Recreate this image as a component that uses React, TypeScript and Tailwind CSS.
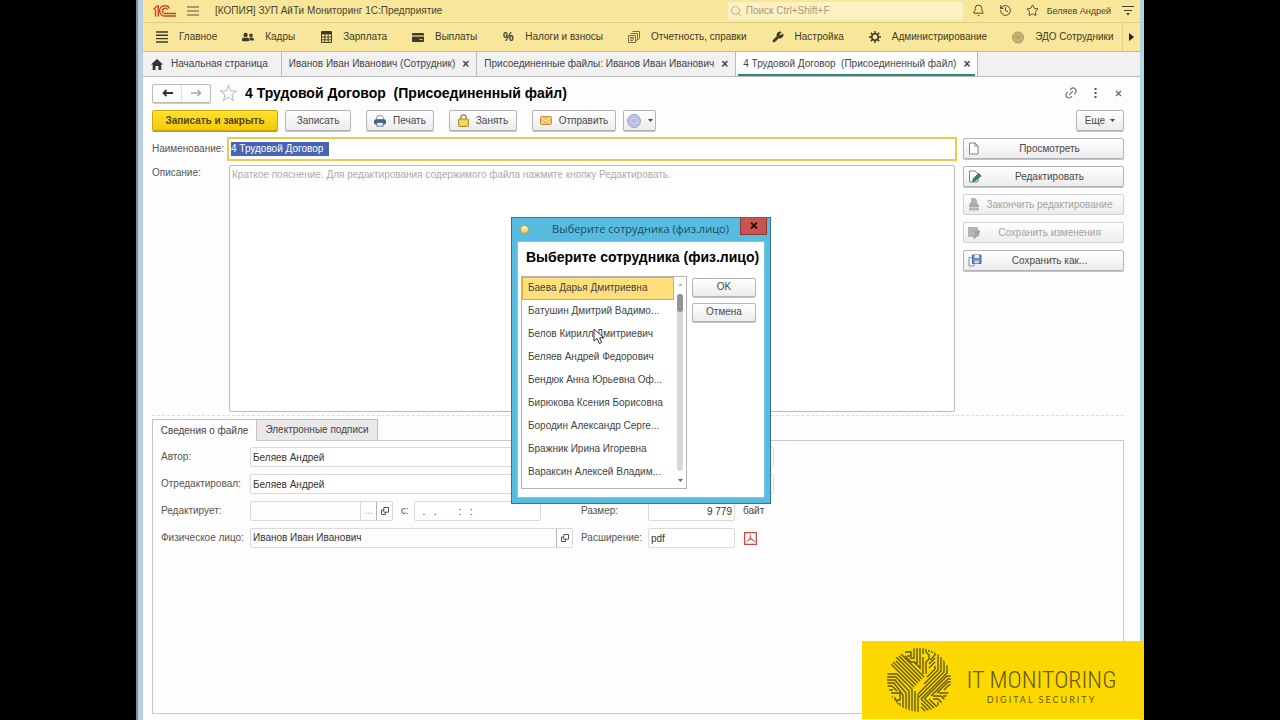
import type { ReactNode } from "react";
import { Bell, History, Link2, Search, Star, Wrench } from "lucide-react";
import { FaUserFriends } from "react-icons/fa";
import clsx from "clsx";

const sections: { label: string; icon: ReactNode }[] = [
  { label: "Главное", icon: <IconLines /> },
  { label: "Кадры", icon: <FaUserFriends size={14} /> },
  { label: "Зарплата", icon: <IconTable /> },
  { label: "Выплаты", icon: <IconCard /> },
  { label: "Налоги и взносы", icon: <span className="text-xs font-bold">%</span> },
  { label: "Отчетность, справки", icon: <IconPapers /> },
  { label: "Настройка", icon: <Wrench size={12} fill="currentColor" /> },
  { label: "Администрирование", icon: <IconGear /> },
  { label: "ЭДО Сотрудники", icon: <IconCoin /> },
];

const employees = [
  "Баева Дарья Дмитриевна",
  "Батушин Дмитрий Вадимо...",
  "Белов Кирилл Дмитриевич",
  "Беляев Андрей Федорович",
  "Бендюк Анна Юрьевна Оф...",
  "Бирюкова Ксения Борисовна",
  "Бородин Александр Серге...",
  "Бражник Ирина Игоревна",
  "Вараксин Алексей Владим...",
];

function IconLines() {
  return (
    <svg width="12" height="12" viewBox="0 0 12 12" stroke="currentColor" strokeWidth="1.4">
      <path d="M0 1h12M0 4.3h12M0 7.6h12M0 11h12" />
    </svg>
  );
}

function IconTable() {
  return (
    <svg width="11" height="12" viewBox="0 0 11 12" fill="none" stroke="currentColor">
      <path d="M.5.5h10v11H.5z" />
      <path d="M.5 2.2h10" strokeWidth="2.4" />
      <path d="M.5 6h10M.5 8.8h10M3.8 3v8.5M7.2 3v8.5" strokeWidth=".9" />
    </svg>
  );
}

function IconCard() {
  return (
    <svg width="12" height="9" viewBox="0 0 12 9">
      <rect width="12" height="9" rx="1" fill="currentColor" />
      <path d="M0 3h12" stroke="#f8e69a" strokeWidth="1.2" />
      <path d="M7.5 6.5h3" stroke="#f8e69a" strokeWidth=".8" />
    </svg>
  );
}

function IconPapers() {
  return (
    <svg width="12" height="12" viewBox="0 0 12 12" fill="none" stroke="#7d6f42">
      <path d="M4.5.5h7v7L10 9M2.5 2.5h7V9L8 10.5" />
      <path d="M.5 4.5h7v7h-7zM2 6.5h4M2 8h4M2 9.5h3" />
    </svg>
  );
}

function IconGear() {
  return (
    <svg width="12" height="12" viewBox="0 0 12 12" fill="none" stroke="currentColor" strokeWidth="1.5">
      <circle cx="6" cy="6" r="3.2" />
      <path d="M6 0v2.5M6 9.5V12M0 6h2.5M9.5 6H12M1.8 1.8l1.7 1.7M8.5 8.5l1.7 1.7M10.2 1.8L8.5 3.5M3.5 8.5l-1.7 1.7" />
    </svg>
  );
}

function IconCoin() {
  return (
    <svg width="13" height="13" viewBox="0 0 13 13">
      <circle cx="6.5" cy="6.5" r="6" fill="#c7b173" stroke="#a8935a" />
      <path d="M4 5.5h5M4 7.5h5" stroke="#b39e62" />
    </svg>
  );
}

function Logo1C() {
  return (
    <svg width="24" height="12" viewBox="0 0 24 12" fill="none" stroke="#cf3f2c">
      <path d="M.5 4.5l3-3M2.5 4.5v7M3.5 1h1.800v10.500" strokeWidth="1.4" />
      <path d="M16.5 3.5A5.2 5.2 0 1 0 12.500 11H23" strokeWidth="1.4" />
      <path d="M14.6 4.8A2.7 2.7 0 1 0 12.500 8.500H23" strokeWidth="1.3" />
    </svg>
  );
}

function IconPrinter() {
  return (
    <svg width="12" height="12" viewBox="0 0 12 12">
      <path d="M3 .8h5l1.500 1.700V5h-7z" fill="#fff" stroke="#6f8296" strokeWidth=".8" />
      <rect y="4.2" width="12" height="5.3" rx="1.8" fill="#46637f" />
      <path d="M2.8 7.5h6.400v3.700H2.800z" fill="#e8eef4" stroke="#46637f" strokeWidth=".8" />
    </svg>
  );
}

function IconLock() {
  return (
    <svg width="11" height="13" viewBox="0 0 11 13">
      <path d="M2.8 6V3.500a2.700 2.700 0 0 1 5.400 0V6" fill="none" stroke="#8c8249" strokeWidth="1.3" />
      <rect x=".5" y="5" width="10" height="7.5" rx=".8" fill="#efcb43" stroke="#a5903c" />
      <path d="M2 7.500h7M2 9.800h7" stroke="#fae798" />
    </svg>
  );
}

function IconMail() {
  return (
    <svg width="12" height="9" viewBox="0 0 12 9">
      <rect x=".5" y=".5" width="11" height="8" rx="1" fill="#f3bd62" stroke="#d28f35" />
      <path d="M1.500 7.500l3-3M10.500 7.500l-3-3M1.500 1.500L6 5l4.500-3.500" fill="none" stroke="#fff0cc" strokeWidth=".9" />
    </svg>
  );
}

function IconStamp() {
  return (
    <svg width="14" height="14" viewBox="0 0 14 14">
      <circle cx="7" cy="7" r="6.4" fill="#c5c9ea" stroke="#9298c9" />
      <circle cx="7" cy="7" r="4" fill="#d9dcf4" stroke="#a2a8d6" strokeWidth=".8" />
      <path d="M4.800 6h4.400M4.800 8h4.400" stroke="#8087c0" strokeWidth=".8" />
    </svg>
  );
}

function IconPage() {
  return (
    <svg width="12" height="13" viewBox="0 0 12 13" fill="#fff" stroke="#80858a">
      <path d="M1.500 1H7l3 3v8H1.500zM7 1v3h3" />
    </svg>
  );
}

function IconEdit() {
  return (
    <svg width="14" height="13" viewBox="0 0 14 13">
      <path d="M1.500 1H7l3 3v8H1.500z" fill="#fff" stroke="#80858a" />
      <path d="M4.500 11.500l.8-3 5.500-5 2.400 2.300-5.700 5z" fill="#3c8a50" stroke="#2b5c3a" strokeWidth=".7" />
    </svg>
  );
}

function IconFinish() {
  return (
    <svg width="12" height="13" viewBox="0 0 12 13" fill="#b4b4b4">
      <path d="M3 0h4l2 2v3H3z" />
      <path d="M2 4.500h7L11 8v1H1V8z" fill="#a9a9a9" />
      <rect x="1" y="9.5" width="10" height="3" rx="1" />
    </svg>
  );
}

function IconCommit() {
  return (
    <svg width="13" height="13" viewBox="0 0 13 13" fill="#b4b4b4">
      <path d="M0 1h10v10H0z" />
      <path d="M6 5l6-1-1 6-2-1-2 4-2-1 2-4z" fill="#a3a3a3" />
    </svg>
  );
}

function IconSaveAs() {
  return (
    <svg width="14" height="13" viewBox="0 0 14 13">
      <path d="M1 3.500h5V12H1z" fill="#eef3f9" stroke="#7f93ad" />
      <path d="M4.500 1H13v8.500H4.500z" fill="#6d8fc0" stroke="#49698f" />
      <path d="M6.500 1H11v3H6.500z" fill="#e8eef7" />
      <path d="M6.500 6.500H11v3H6.500z" fill="#c3d1e6" />
    </svg>
  );
}

function IconOpen() {
  return (
    <svg width="8" height="8" viewBox="0 0 8 8" fill="#fff" stroke="#555">
      <path d="M.5 3h4v4.500h-4z" />
      <path d="M2.800.5h4.700v4.700H2.800z" />
    </svg>
  );
}

function IconPdf() {
  return (
    <svg width="13" height="13" viewBox="0 0 13 13" fill="none" stroke="#c9483d">
      <path d="M.7.7h11.600v11.600H.7z" strokeWidth="1.3" />
      <path d="M6 2.500c1 2 .5 4.500-3.500 7.500M6.500 5c.5 2 2 3.500 4.500 4.500M4.500 8c2-.8 3-.8 4.500-.5" />
    </svg>
  );
}

function Caret({ className }: { className?: string }) {
  return (
    <svg className={className} width="5" height="3" viewBox="0 0 5 3" fill="currentColor">
      <path d="M0 0h5L2.500 3z" />
    </svg>
  );
}

function CircuitLogo() {
  return (
    <svg width="64" height="64" viewBox="0 0 64 64" fill="none" stroke="#5f5a14" strokeWidth="1.4">
      <clipPath id="disc">
        <circle cx="32" cy="32" r="32" />
      </clipPath>
      <g clipPath="url(#disc)">
        {/* band from the upper left to the hub */}
        <path d="M3 15l24 24M6 14l23 23M9 13l22 22M9 9l24 24M12 8l23 23M14 6l23 23" />
        {/* left rails that turn down */}
        <path d="M0 26h10l15 15v23M0 29h9l13 14v21M0 32h8l11 13v19M0 35h7l9 12v14M28 43v21M31 46v18" />
        {/* lower left */}
        <path d="M0 38h5l5 5M2 42h4M4 45h9v7H8v-3M5 48v6M7 56h6v6M10 55v-3" />
        {/* top */}
        <path d="M18 4h6v4h-4M18 8l6 6h4M27 0v10h-4M30 0v15h-3M33 0v20l-5-5M36 0v6M36 9v17M39 0v4l3 3v4l-3 3v12" />
        <path d="M42 0v4M48 3v4l-5 5M48 10l-6 6M48 14l-6 6M45 2v3M48 18v3l-8 8" />
        {/* right rails */}
        <path d="M51 5v17L37 36M54 9v14L31 46M57 12v12L32 49M60 17v8L34 51" />
        <path d="M64 28h-4L37 51M64 31h-3L44 48M64 34h-3L50 45M64 37h-2l-5 5" />
        {/* lower right */}
        <path d="M34 51l12 12M34 55l8 8M34 59l5 5M38 51l11 11M42 51l9 9M46 48h8l4 4M46 51h5l6 6M52 45h10M56 48h6M51 54v5" />
      </g>
    </svg>
  );
}

type BtnProps = { children: ReactNode; className?: string; disabled?: boolean; small?: boolean };

function Btn({ children, className, disabled, small }: BtnProps) {
  return (
    <button
      type="button"
      disabled={disabled}
      className={clsx(
        "flex items-center justify-center rounded-xs border bg-linear-to-b from-white to-[#ececec]",
        small ? "h-[19px]" : "h-[21px]",
        disabled ? "border-[#d2d2d2] text-[#a3a3a3]" : "border-[#b4b4b4] text-[#484848] shadow-[0_1px_0_#c4c4c4]",
        className,
      )}
    >
      {children}
    </button>
  );
}

function SideBtn({ icon, label, disabled }: { icon: ReactNode; label: string; disabled?: boolean }) {
  return (
    <Btn disabled={disabled} className="w-full pl-1 pr-2">
      <span className="flex w-4 justify-start">{icon}</span>
      <span className="flex-1 text-center">{label}</span>
    </Btn>
  );
}

function Tab({ label, active }: { label: string; active?: boolean }) {
  return (
    <div className={clsx("flex border-r border-[#b9b9b9] px-[2px]", active && "bg-white")}>
      <div
        className={clsx(
          "flex items-center gap-[7px] px-[5px]",
          active && "border-b-2 border-[#2d8a72] pt-[2px]",
        )}
      >
        <a href="#" className="whitespace-pre">{label}</a>
        <button type="button" aria-label="Закрыть вкладку" className="text-xs font-bold leading-none">×</button>
      </div>
    </div>
  );
}

const field = "h-5 min-w-0 rounded-xs border border-[#dadada] bg-white px-[2px] text-[#333]";

function TitleBar() {
  return (
    <header className="flex h-[23px] items-center border-b border-[#dfcd83] bg-[#f8e69a] pb-px pl-[10px] pr-[6px] text-[#4b452e]">
      <Logo1C />
      <button type="button" aria-label="Меню" className="ml-[10px]">
        <svg width="12" height="10" viewBox="0 0 12 10" stroke="#5c5538">
          <path d="M0 1h12M0 5h12M0 9h12" />
        </svg>
      </button>
      <span className="ml-4">[КОПИЯ] ЗУП АйТи Мониторинг 1С:Предприятие</span>
      <label className="ml-auto flex h-[18px] w-[235px] items-center gap-1 bg-[#fcf1c4] px-[2px] text-[#a79d74]">
        <Search size={12} strokeWidth={1.5} />
        <input
          aria-label="Поиск"
          placeholder="Поиск Ctrl+Shift+F"
          className="min-w-0 flex-1 bg-transparent outline-none placeholder:text-[#a79d74]"
        />
      </label>
      <div className="ml-[9px] flex items-center gap-[14px]">
        <button type="button" aria-label="Уведомления"><Bell size={13} strokeWidth={1.8} /></button>
        <button type="button" aria-label="История"><History size={13} strokeWidth={1.8} /></button>
        <button type="button" aria-label="Избранное"><Star size={13} strokeWidth={1.8} /></button>
      </div>
      <a href="#" className="ml-2 text-[9px]">Беляев Андрей</a>
      <button type="button" aria-label="Настройки окна" className="ml-[11px]">
        <svg width="12" height="11" viewBox="0 0 12 11" stroke="currentColor">
          <path d="M0 1.500h12M2 5.500h8" />
          <path d="M4 8h4l-2 2.500z" fill="currentColor" stroke="none" />
        </svg>
      </button>
    </header>
  );
}

function SectionBar() {
  return (
    <nav className="flex h-[29px] items-center border-b border-[#cdbd7c] bg-[#f8e69a] pl-[13px] text-[#3f3a26]">
      <div className="flex flex-1 items-center gap-[25px] overflow-hidden whitespace-nowrap">
        {sections.map((s) => (
          <a key={s.label} href="#" className="flex items-center gap-[11px]">
            <span className="flex w-3 justify-center">{s.icon}</span>
            {s.label}
          </a>
        ))}
      </div>
      <button type="button" aria-label="Далее" className="flex h-full w-[18px] items-center justify-center border-l border-[#e0cf86]">
        <svg width="5" height="8" viewBox="0 0 5 8">
          <path d="M0 0l5 4-5 4z" fill="#222" />
        </svg>
      </button>
    </nav>
  );
}

function WindowTabs() {
  return (
    <nav className="flex h-[25px] border-b border-[#b9b9b9] bg-[#f1f1f1] text-[#444]">
      <a href="#" className="flex items-center gap-2 border-r border-[#b9b9b9] pl-2 pr-[13px]">
        <svg width="12" height="11" viewBox="0 0 12 11" fill="#333">
          <path d="M6 0l6 5.500h-1.700V11H7.500V7h-3v4H1.700V5.500H0z" />
        </svg>
        Начальная страница
      </a>
      <Tab label="Иванов Иван Иванович (Сотрудник)" />
      <Tab label="Присоединенные файлы: Иванов Иван Иванович" />
      <Tab label="4 Трудовой Договор  (Присоединенный файл)" active />
    </nav>
  );
}

function FormHeader() {
  return (
    <div className="flex h-[33px] items-center pb-px">
      <div className="flex h-[19px] w-[59px] rounded-xs border border-[#b9b9b9] shadow-[0_1px_0_#ccc]">
        <button type="button" aria-label="Назад" className="flex flex-1 items-center justify-center border-r border-[#dedede] text-[#333]">
          <svg width="11" height="8" viewBox="0 0 11 8" fill="none" stroke="currentColor" strokeWidth="1.8">
            <path d="M11 4H1.500M4.500 1l-3 3 3 3" />
          </svg>
        </button>
        <button type="button" aria-label="Вперед" className="flex flex-1 items-center justify-center text-[#a8a8a8]">
          <svg width="11" height="8" viewBox="0 0 11 8" fill="none" stroke="currentColor" strokeWidth="1.5">
            <path d="M0 4h9.500M6.500 1l3 3-3 3" />
          </svg>
        </button>
      </div>
      <button type="button" aria-label="В избранное" className="ml-2 text-[#b5b5b5]">
        <svg width="19" height="18" viewBox="0 0 19 18" fill="none" stroke="currentColor">
          <path d="M9.500 1.200l2.100 5.700 6 .2-4.700 3.700 1.700 5.800-5.100-3.400-5.100 3.400 1.700-5.800L1.400 7.100l6-.2z" />
        </svg>
      </button>
      <h1 className="ml-[7px] whitespace-pre text-sm font-bold text-black">4 Трудовой Договор  (Присоединенный файл)</h1>
      <div className="ml-auto flex items-center gap-4 pr-[2px] text-[#666]">
        <button type="button" aria-label="Ссылка"><Link2 size={14} strokeWidth={1.8} className="-rotate-45" /></button>
        <button type="button" aria-label="Ещё действия">
          <svg width="3" height="10" viewBox="0 0 3 10" fill="#555">
            <path d="M.5 0h2v2h-2zM.5 4h2v2h-2zM.5 8h2v2h-2z" />
          </svg>
        </button>
        <button type="button" aria-label="Закрыть" className="ml-[2px]">
          <svg width="7" height="7" viewBox="0 0 7 7" stroke="currentColor" strokeWidth="1.2">
            <path d="M1 1l5 5M6 1L1 6" />
          </svg>
        </button>
      </div>
    </div>
  );
}

function Toolbar() {
  return (
    <div className="flex">
      <button
        type="button"
        className="h-[21px] w-[126px] rounded-xs border border-[#c9a70f] bg-linear-to-b from-[#ffe12b] to-[#f5ca00] font-bold text-[#54470c] shadow-[0_1px_0_#b79a2a]"
      >
        Записать и закрыть
      </button>
      <Btn className="ml-[7px] w-[66px]">Записать</Btn>
      <Btn className="ml-[15px] w-[68px] gap-[7px]"><IconPrinter />Печать</Btn>
      <Btn className="ml-[15px] w-[68px] gap-[7px]"><IconLock />Занять</Btn>
      <Btn className="ml-[15px] w-[84px] gap-[7px]"><IconMail />Отправить</Btn>
      <Btn className="ml-[7px] w-[33px] gap-[7px]"><IconStamp /><Caret /></Btn>
      <Btn className="ml-auto w-12 gap-[5px]">Еще<Caret /></Btn>
    </div>
  );
}

function FileInfo() {
  return (
    <section className="mt-[3px] flex flex-1 flex-col border-t border-dashed border-[#ddd] pt-[3px]">
      <div className="flex h-[22px]">
        <button type="button" className="relative z-10 w-[105px] border border-b-0 border-[#c2c2c2] bg-[#fdfdfd] text-[#444]">
          Сведения о файле
        </button>
        <button type="button" className="w-[121px] border border-l-0 border-[#bcbcbc] bg-[#e9e9e9] text-[#444]">
          Электронные подписи
        </button>
      </div>
      <div className="-mt-px flex flex-1 flex-col gap-[7px] border border-[#c8c8c8] px-2 pt-[6px] text-[#555]">
        <div className="flex items-center">
          <label htmlFor="author" className="w-[89px]">Автор:</label>
          <input id="author" defaultValue="Беляев Андрей" className={clsx(field, "w-[524px]")} />
        </div>
        <div className="flex items-center">
          <label htmlFor="editor" className="w-[89px]">Отредактировал:</label>
          <input id="editor" defaultValue="Беляев Андрей" className={clsx(field, "w-[524px]")} />
        </div>
        <div className="flex items-center">
          <label htmlFor="editing" className="w-[89px]">Редактирует:</label>
          <div className="flex h-5 w-[143px] rounded-xs border border-[#dadada]">
            <input id="editing" className="min-w-0 flex-1" />
            <button type="button" aria-label="Выбрать" className="w-4 border-l border-[#dadada] text-[#aaa]">...</button>
            <button type="button" aria-label="Открыть" className="flex w-4 items-center justify-center border-l border-[#b5b5b5]"><IconOpen /></button>
          </div>
          <label htmlFor="since" className="ml-2 w-[13px]">с:</label>
          <input id="since" defaultValue="  .   .        :   :" className={clsx(field, "w-[127px]")} />
          <label htmlFor="size" className="ml-10 w-[67px]">Размер:</label>
          <input id="size" defaultValue="9 779" className={clsx(field, "w-[87px] text-right")} />
          <span className="ml-2 text-[#444]">байт</span>
        </div>
        <div className="flex items-center">
          <label htmlFor="person" className="w-[89px]">Физическое лицо:</label>
          <div className="flex h-5 w-[323px] rounded-xs border border-[#dadada]">
            <input id="person" defaultValue="Иванов Иван Иванович" className="min-w-0 flex-1 px-[2px] text-[#333]" />
            <button type="button" aria-label="Открыть" className="flex w-4 items-center justify-center border-l border-[#b5b5b5]"><IconOpen /></button>
          </div>
          <label htmlFor="ext" className="ml-2 w-[67px]">Расширение:</label>
          <input id="ext" defaultValue="pdf" className={clsx(field, "w-[87px]")} />
          <span className="ml-[9px]"><IconPdf /></span>
        </div>
      </div>
    </section>
  );
}

function EmployeeDialog() {
  return (
    <div className="absolute inset-0 z-20 flex items-center justify-center">
      <div role="dialog" aria-labelledby="dlg-title" className="relative w-[260px] border border-[#35748f] bg-[#58bce0] px-[5px] pb-[5px]">
        <div className="flex h-[23px] items-center pl-[3px] text-[#1d4a5e]">
          <span className="size-[9px] rounded-full border border-[#c99f2b] bg-linear-to-b from-[#fffbe0] to-[#f3c22f]" />
          <span className="flex-1 pl-3 text-center font-['Open_Sans',sans-serif] text-[11px]">Выберите сотрудника (физ.лицо)</span>
          <button type="button" aria-label="Закрыть окно" className="-mr-[2px] flex h-[17px] w-[27px] items-center justify-center self-start border border-t-0 border-[#8d3a36] bg-[#c75450]">
            <svg width="8" height="7" viewBox="0 0 8 7" stroke="#2a0f0e" strokeWidth="1.8">
              <path d="M1 .5l6 6M7 .5l-6 6" />
            </svg>
          </button>
        </div>
        <div className="border border-[#79c6e2] bg-white px-[3px] pb-2 pt-[5px]">
          <h2 id="dlg-title" className="pl-[5px] text-sm font-bold leading-5 text-black">Выберите сотрудника (физ.лицо)</h2>
          <div className="mt-[9px] flex">
            <div className="flex h-[213px] w-[166px] border border-[#b4b4b4]">
              <ul role="listbox" aria-label="Сотрудники" className="flex-1 overflow-hidden whitespace-nowrap text-[#444]">
                {employees.map((name, i) => (
                  <li
                    key={name}
                    role="option"
                    aria-selected={i === 0}
                    className={clsx(
                      "flex h-[23px] items-center border pl-[5px]",
                      i === 0 ? "border-[#dfae27] bg-[#fddf7b]" : "border-transparent",
                    )}
                  >
                    {name}
                  </li>
                ))}
              </ul>
              <div className="flex w-3 flex-col items-center py-[6px] text-[#666]">
                <Caret className="rotate-180 text-[#bbb]" />
                <div className="my-2 w-[6px] flex-1 rounded-full bg-[#d8d8d8]">
                  <div className="h-[18px] rounded-full bg-[#949494]" />
                </div>
                <Caret />
              </div>
            </div>
            <div className="ml-[5px] mt-[2px] flex w-16 flex-col gap-[6px]">
              <Btn small>OK</Btn>
              <Btn small>Отмена</Btn>
            </div>
          </div>
        </div>
        {/* mouse pointer over the list */}
        <svg className="absolute left-[81px] top-[110px]" width="12" height="17" viewBox="0 0 12 17">
          <path d="M1 1v12l3-2.500 2.500 5 2.200-1.100-2.200-4.600 4-.3z" fill="#fff" stroke="#333" />
        </svg>
      </div>
    </div>
  );
}

export default function App() {
  return (
    <div className="flex min-h-screen bg-black px-[136px] font-['Liberation_Sans',Arial,sans-serif] text-[10px] leading-4">
      <div className="relative flex flex-1 flex-col border-l-2 border-[#7f8f96]">
        <div className="flex flex-1 flex-col border-l-[5px] border-r-4 border-l-[#b9d0e0] border-r-[#b5d3e2] bg-[#fdfdfd]">
          <TitleBar />
          <SectionBar />
          <WindowTabs />
          <main className="flex flex-1 flex-col pb-[6px] pl-[9px] pr-4">
            <FormHeader />
            <Toolbar />
            <div className="mt-[6px] flex gap-[6px]">
              <div className="grid flex-1 grid-cols-[75px_1fr] gap-y-1">
                <label htmlFor="name" className="self-center text-[#555]">Наименование:</label>
                <div className="flex h-6 items-center border-2 border-[#ecc94f] bg-white px-[2px]">
                  <input
                    id="name"
                    defaultValue="4 Трудовой Договор"
                    className="h-[14px] w-[98px] bg-[#4a64b5] text-white outline-none"
                  />
                </div>
                <label htmlFor="descr" className="text-[#555]">Описание:</label>
                <textarea
                  id="descr"
                  placeholder="Краткое пояснение. Для редактирования содержимого файла нажмите кнопку Редактировать."
                  className="mx-[2px] h-[247px] resize-none rounded-xs border border-[#b9b9b9] bg-white px-[2px] py-px placeholder:text-[#aaa]"
                />
              </div>
              <div className="mt-px flex w-[161px] flex-col gap-[7px]">
                <SideBtn icon={<IconPage />} label="Просмотреть" />
                <SideBtn icon={<IconEdit />} label="Редактировать" />
                <SideBtn icon={<IconFinish />} label="Закончить редактирование" disabled />
                <SideBtn icon={<IconCommit />} label="Сохранить изменения" disabled />
                <SideBtn icon={<IconSaveAs />} label="Сохранить как..." />
              </div>
            </div>
            <FileInfo />
          </main>
        </div>
        <EmployeeDialog />
        <div className="absolute bottom-px right-0 z-30 flex h-[78px] w-[282px] items-center bg-[#fdd700] pl-[25px] text-[#5f5a14]">
          <CircuitLogo />
          <div className="flex flex-1 flex-col items-center pr-3 pt-3">
            <span className="font-['Roboto_Condensed',Roboto,sans-serif] text-2xl font-light leading-7">IT MONITORING</span>
            <span className="font-['Lato',sans-serif] text-[9px] leading-3 tracking-[2px]">DIGITAL SECURITY</span>
          </div>
        </div>
      </div>
    </div>
  );
}
